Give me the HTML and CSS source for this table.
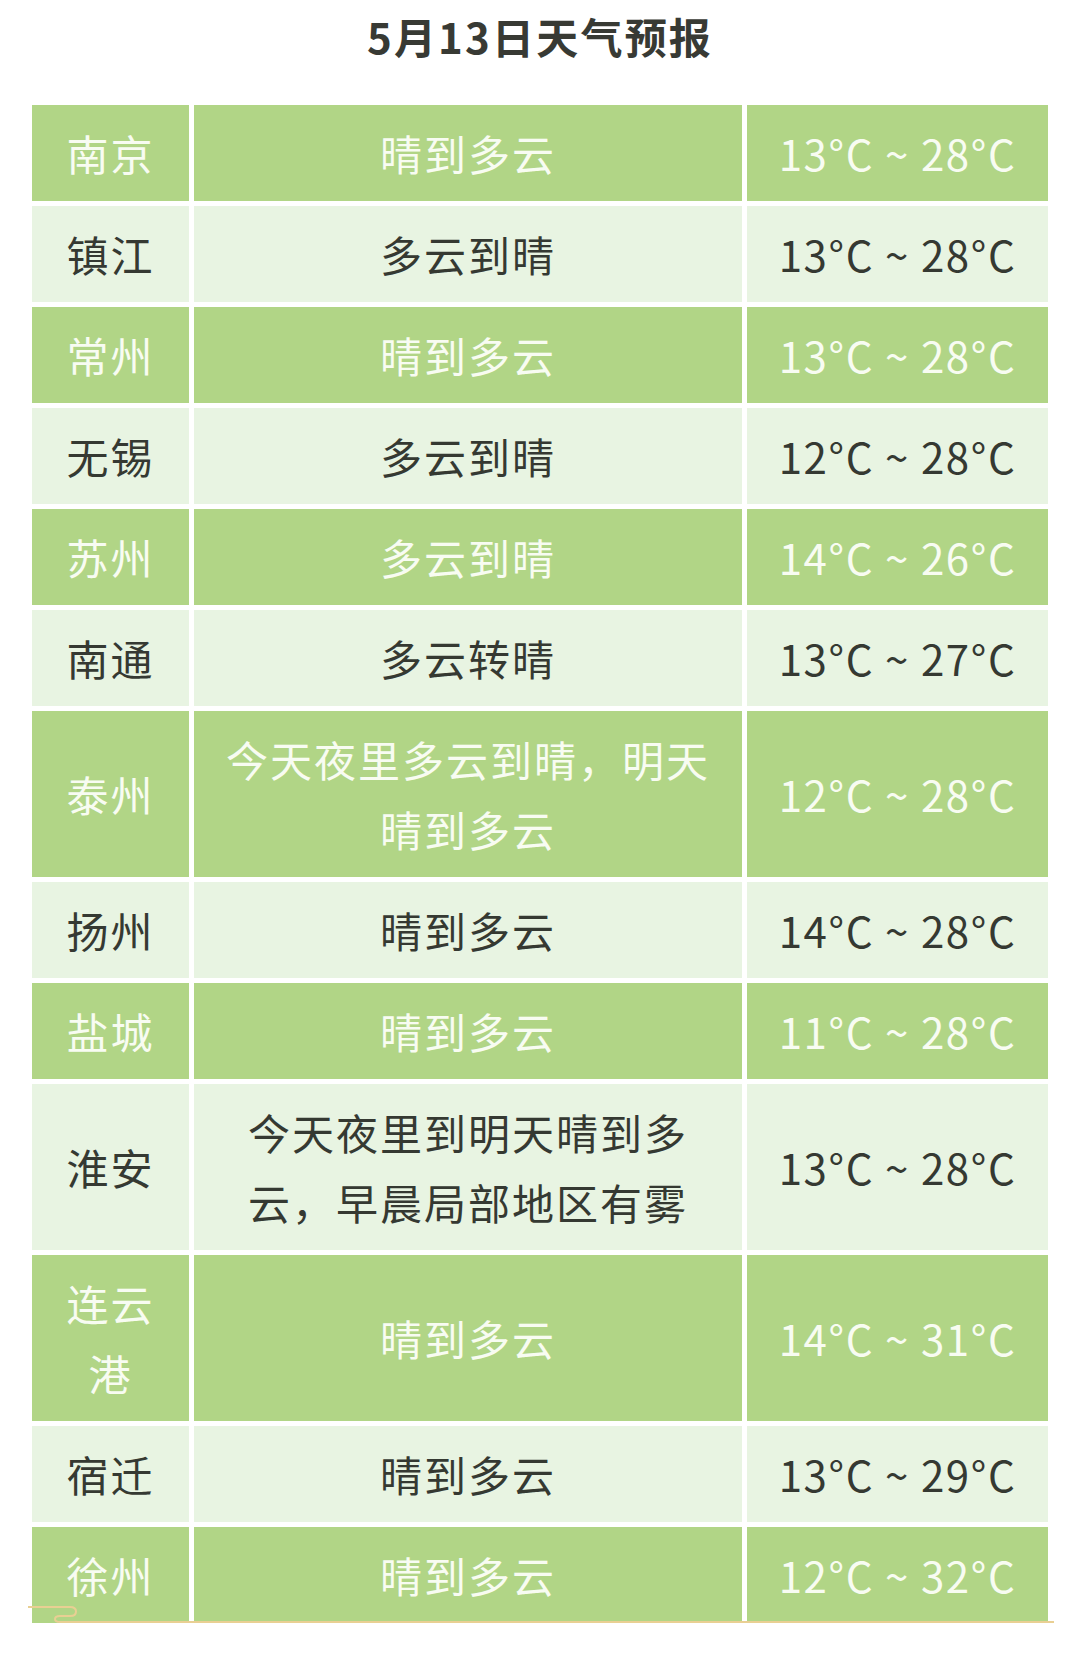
FILE: index.html
```html
<!DOCTYPE html>
<html lang="zh-CN">
<head>
<meta charset="utf-8">
<title>5月13日天气预报</title>
<link rel="stylesheet" href="styles.css">
</head>
<body>
<div class="page">
  <h1 class="title">5月13日天气预报</h1>
  <div class="forecast">
    <div class="row green"><div class="cell city">南京</div><div class="cell desc">晴到多云</div><div class="cell temp">13°C ~ 28°C</div></div>
    <div class="row light"><div class="cell city">镇江</div><div class="cell desc">多云到晴</div><div class="cell temp">13°C ~ 28°C</div></div>
    <div class="row green"><div class="cell city">常州</div><div class="cell desc">晴到多云</div><div class="cell temp">13°C ~ 28°C</div></div>
    <div class="row light"><div class="cell city">无锡</div><div class="cell desc">多云到晴</div><div class="cell temp">12°C ~ 28°C</div></div>
    <div class="row green"><div class="cell city">苏州</div><div class="cell desc">多云到晴</div><div class="cell temp">14°C ~ 26°C</div></div>
    <div class="row light"><div class="cell city">南通</div><div class="cell desc">多云转晴</div><div class="cell temp">13°C ~ 27°C</div></div>
    <div class="row green"><div class="cell city">泰州</div><div class="cell desc">今天夜里多云到晴，明天晴到多云</div><div class="cell temp">12°C ~ 28°C</div></div>
    <div class="row light"><div class="cell city">扬州</div><div class="cell desc">晴到多云</div><div class="cell temp">14°C ~ 28°C</div></div>
    <div class="row green"><div class="cell city">盐城</div><div class="cell desc">晴到多云</div><div class="cell temp">11°C ~ 28°C</div></div>
    <div class="row light"><div class="cell city">淮安</div><div class="cell desc">今天夜里到明天晴到多云，早晨局部地区有雾</div><div class="cell temp">13°C ~ 28°C</div></div>
    <div class="row green"><div class="cell city">连云港</div><div class="cell desc">晴到多云</div><div class="cell temp">14°C ~ 31°C</div></div>
    <div class="row light"><div class="cell city">宿迁</div><div class="cell desc">晴到多云</div><div class="cell temp">13°C ~ 29°C</div></div>
    <div class="row green"><div class="cell city">徐州</div><div class="cell desc">晴到多云</div><div class="cell temp">12°C ~ 32°C</div></div>
    <svg class="deco" width="1030" height="22" viewBox="0 0 1030 22" aria-hidden="true">
      <path d="M2 2 H44 Q50 2 50 6.5 Q50 11 44 11 H34 Q29 11 29 14 Q29 17 34 17 H1028" fill="none" stroke="#e9cf93" stroke-width="2"/>
    </svg>
  </div>
</div>
</body>
</html>
```

FILE: styles.css
```css
html, body {
  margin: 0;
  padding: 0;
  background: #ffffff;
}

body {
  font-family: "Noto Sans CJK SC", "Noto Sans", sans-serif;
  width: 1080px;
  min-height: 1676px;
}

.page {
  padding: 0 32px;
}

.title {
  margin: 0;
  height: 105px;
  line-height: 72px;
  font-size: 42px;
  font-weight: 700;
  letter-spacing: 2.2px;
  text-align: center;
  color: #383a34;
}

.forecast {
  position: relative;
  display: flex;
  flex-direction: column;
  gap: 5px;
  width: 1016px;
}

.row {
  display: grid;
  grid-template-columns: 157px 548px 301px;
  gap: 5px;
}

.cell {
  display: flex;
  align-items: center;
  justify-content: center;
  text-align: center;
  padding: 13px 20px;
  font-size: 42px;
  line-height: 70px;
  letter-spacing: 2px;
}

.green .cell {
  background: #b1d586;
  color: #f8fcf2;
}

.light .cell {
  background: #e8f4e2;
  color: #353932;
}

.temp {
  padding-left: 8px;
  padding-right: 8px;
  letter-spacing: 1.6px;
}

.deco {
  position: absolute;
  left: -6px;
  bottom: -4px;
}
```
